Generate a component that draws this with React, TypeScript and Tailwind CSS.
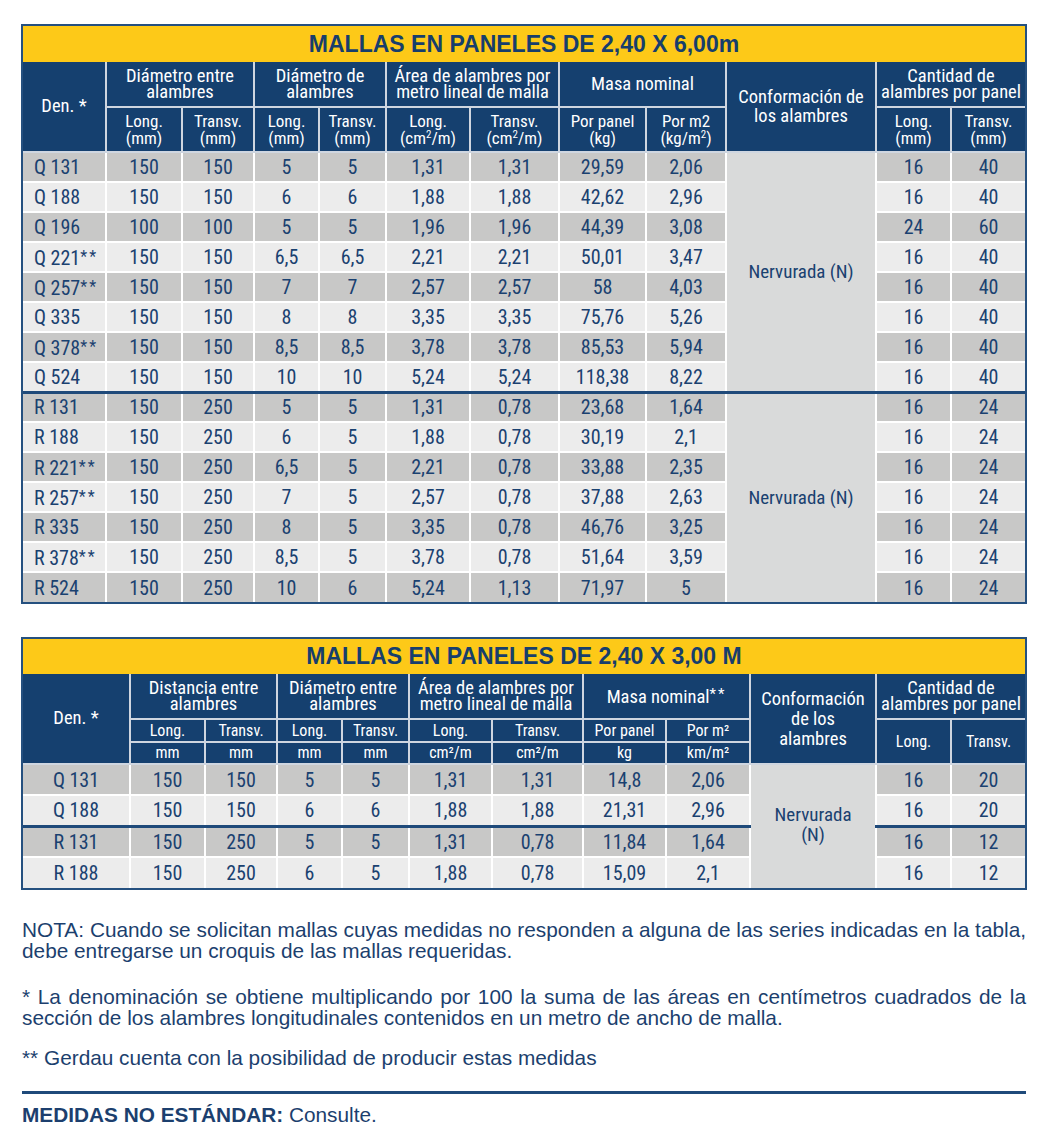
import React from "react";

type Row = string[];

const panel6: Row[] = [
  ["Q 131", "150", "150", "5", "5", "1,31", "1,31", "29,59", "2,06", "16", "40"],
  ["Q 188", "150", "150", "6", "6", "1,88", "1,88", "42,62", "2,96", "16", "40"],
  ["Q 196", "100", "100", "5", "5", "1,96", "1,96", "44,39", "3,08", "24", "60"],
  ["Q 221**", "150", "150", "6,5", "6,5", "2,21", "2,21", "50,01", "3,47", "16", "40"],
  ["Q 257**", "150", "150", "7", "7", "2,57", "2,57", "58", "4,03", "16", "40"],
  ["Q 335", "150", "150", "8", "8", "3,35", "3,35", "75,76", "5,26", "16", "40"],
  ["Q 378**", "150", "150", "8,5", "8,5", "3,78", "3,78", "85,53", "5,94", "16", "40"],
  ["Q 524", "150", "150", "10", "10", "5,24", "5,24", "118,38", "8,22", "16", "40"],
  ["R 131", "150", "250", "5", "5", "1,31", "0,78", "23,68", "1,64", "16", "24"],
  ["R 188", "150", "250", "6", "5", "1,88", "0,78", "30,19", "2,1", "16", "24"],
  ["R 221**", "150", "250", "6,5", "5", "2,21", "0,78", "33,88", "2,35", "16", "24"],
  ["R 257**", "150", "250", "7", "5", "2,57", "0,78", "37,88", "2,63", "16", "24"],
  ["R 335", "150", "250", "8", "5", "3,35", "0,78", "46,76", "3,25", "16", "24"],
  ["R 378**", "150", "250", "8,5", "5", "3,78", "0,78", "51,64", "3,59", "16", "24"],
  ["R 524", "150", "250", "10", "6", "5,24", "1,13", "71,97", "5", "16", "24"],
];

const panel3: Row[] = [
  ["Q 131", "150", "150", "5", "5", "1,31", "1,31", "14,8", "2,06", "16", "20"],
  ["Q 188", "150", "150", "6", "6", "1,88", "1,88", "21,31", "2,96", "16", "20"],
  ["R 131", "150", "250", "5", "5", "1,31", "0,78", "11,84", "1,64", "16", "12"],
  ["R 188", "150", "250", "6", "5", "1,88", "0,78", "15,09", "2,1", "16", "12"],
];

const widths6 = [83, 76, 72, 65, 67, 84, 89, 87, 80, 150, 75, 74];
const widths3 = [107, 75, 72, 65, 67, 83, 91, 83, 84, 126, 75, 74];

// "Q 221**" -> name + spaced stars
const Den = ({ v }: { v: string }) => {
  const name = v.replace(/\*+$/, "");
  const stars = v.slice(name.length);
  return (
    <>
      {name}
      {stars && <span className="text-[16px] tracking-[2px] align-[3px]">{stars}</span>}
    </>
  );
};

const th = "border-2 border-[#cfd6e0] text-white font-normal p-0 align-middle";
const td = "border-2 border-white p-0 text-center align-middle whitespace-nowrap";

export default function App() {
  return (
    <div className="w-[1048px] bg-white pt-[24px] pb-[20px] font-['Roboto_Condensed','Roboto',sans-serif] [font-stretch:condensed] text-[#1a4170]">
      {/* Mallas 2,40 x 6,00 */}
      <div className="mx-[21px] border-2 border-[#25507f]">
        <div className="h-[36px] bg-[#fdc918] flex items-center justify-center font-['Liberation_Sans',Arial,sans-serif] [font-stretch:normal] font-bold text-[23px] text-[#173e6c]">
          MALLAS EN PANELES DE 2,40 X 6,00m
        </div>
        <table className="w-full table-fixed border-collapse border-hidden">
          <colgroup>
            {widths6.map((w, i) => (
              <col key={i} style={{ width: w }} />
            ))}
          </colgroup>
          <thead className="bg-[#15406f]">
            <tr className="h-[45px] text-[18.5px] leading-[16.5px]">
              <th rowSpan={2} className={th}>Den. *</th>
              <th colSpan={2} className={th}>Diámetro entre<br />alambres</th>
              <th colSpan={2} className={th}>Diámetro de<br />alambres</th>
              <th colSpan={2} className={th}>Área de alambres por<br />metro lineal de malla</th>
              <th colSpan={2} className={th}>Masa nominal</th>
              <th rowSpan={2} className={`${th} leading-[19px]`}>Conformación de<br />los alambres</th>
              <th colSpan={2} className={th}>Cantidad de<br />alambres por panel</th>
            </tr>
            <tr className="h-[45px] text-[17px] leading-[17px]">
              <th className={th}>Long.<br />(mm)</th>
              <th className={th}>Transv.<br />(mm)</th>
              <th className={th}>Long.<br />(mm)</th>
              <th className={th}>Transv.<br />(mm)</th>
              <th className={th}>Long.<br />(cm<sup className="text-[11px]">2</sup>/m)</th>
              <th className={th}>Transv.<br />(cm<sup className="text-[11px]">2</sup>/m)</th>
              <th className={th}>Por panel<br />(kg)</th>
              <th className={th}>Por m2<br />(kg/m<sup className="text-[11px]">2</sup>)</th>
              <th className={th}>Long.<br />(mm)</th>
              <th className={th}>Transv.<br />(mm)</th>
            </tr>
          </thead>
          <tbody className="text-[20px] leading-[22px]">
            {panel6.map((r, i) => {
              const bg = i % 2 === 0 ? "bg-[#c8c8c7]" : "bg-[#ececec]";
              const sep = i === 8 ? " border-t-[3px] border-t-[#1f4a7a]" : "";
              return (
                <tr key={r[0]} className={`h-[30px] ${bg}`}>
                  <td className={`${td}${sep} text-left pl-[11px]`}><Den v={r[0]} /></td>
                  {r.slice(1, 9).map((v, j) => (
                    <td key={j} className={`${td}${sep}`}>{v}</td>
                  ))}
                  {(i === 0 || i === 8) && (
                    <td rowSpan={i === 0 ? 8 : 7} className={`${td}${sep} bg-[#d9dada] text-[19px]`}>
                      Nervurada (N)
                    </td>
                  )}
                  {r.slice(9).map((v, j) => (
                    <td key={j} className={`${td}${sep}`}>{v}</td>
                  ))}
                </tr>
              );
            })}
          </tbody>
        </table>
      </div>

      {/* Mallas 2,40 x 3,00 */}
      <div className="mx-[21px] mt-[33px] border-2 border-[#25507f]">
        <div className="h-[35px] bg-[#fdc918] flex items-center justify-center font-['Liberation_Sans',Arial,sans-serif] [font-stretch:normal] font-bold text-[23px] text-[#173e6c]">
          MALLAS EN PANELES DE 2,40 X 3,00 M
        </div>
        <table className="w-full table-fixed border-collapse border-hidden">
          <colgroup>
            {widths3.map((w, i) => (
              <col key={i} style={{ width: w }} />
            ))}
          </colgroup>
          <thead className="bg-[#15406f]">
            <tr className="h-[45px] text-[18.5px] leading-[16.5px]">
              <th rowSpan={3} className={th}>Den. *</th>
              <th colSpan={2} className={th}>Distancia entre<br />alambres</th>
              <th colSpan={2} className={th}>Diámetro entre<br />alambres</th>
              <th colSpan={2} className={th}>Área de alambres por<br />metro lineal de malla</th>
              <th colSpan={2} className={th}>
                Masa nominal<span className="text-[15px] tracking-[2px] align-[4px]">**</span>
              </th>
              <th rowSpan={3} className={`${th} leading-[20px]`}>Conformación<br />de los<br />alambres</th>
              <th colSpan={2} className={th}>Cantidad de<br />alambres por panel</th>
            </tr>
            <tr className="h-[23px] text-[16px] leading-[18px]">
              <th className={th}>Long.</th>
              <th className={th}>Transv.</th>
              <th className={th}>Long.</th>
              <th className={th}>Transv.</th>
              <th className={th}>Long.</th>
              <th className={th}>Transv.</th>
              <th className={th}>Por panel</th>
              <th className={th}>Por m²</th>
              <th rowSpan={2} className={th}>Long.</th>
              <th rowSpan={2} className={th}>Transv.</th>
            </tr>
            <tr className="h-[22px] text-[16px] leading-[18px]">
              <th className={th}>mm</th>
              <th className={th}>mm</th>
              <th className={th}>mm</th>
              <th className={th}>mm</th>
              <th className={th}>cm²/m</th>
              <th className={th}>cm²/m</th>
              <th className={th}>kg</th>
              <th className={th}>km/m²</th>
            </tr>
          </thead>
          <tbody className="text-[20px] leading-[22px]">
            {panel3.map((r, i) => {
              const bg = i % 2 === 0 ? "bg-[#c8c8c7]" : "bg-[#ececec]";
              const sep = i === 2 ? " border-t-[3px] border-t-[#1f4a7a]" : "";
              return (
                <tr key={r[0]} className={`h-[31px] ${bg}`}>
                  <td className={`${td}${sep}`}>{r[0]}</td>
                  {r.slice(1, 9).map((v, j) => (
                    <td key={j} className={`${td}${sep}`}>{v}</td>
                  ))}
                  {i === 0 && (
                    <td rowSpan={4} className={`${td} bg-[#d9dada] text-[19px] leading-[20px] pb-[4px]`}>
                      Nervurada<br />(N)
                    </td>
                  )}
                  {r.slice(9).map((v, j) => (
                    <td key={j} className={`${td}${sep}`}>{v}</td>
                  ))}
                </tr>
              );
            })}
          </tbody>
        </table>
      </div>

      {/* Notas */}
      <div className="mx-[22px] mt-[29px] font-['Liberation_Sans',Arial,sans-serif] [font-stretch:normal] text-[20.8px] leading-[21px] text-[#1c3f6e] text-justify">
        <p>
          NOTA: Cuando se solicitan mallas cuyas medidas no responden a alguna de las series indicadas en la tabla,
          debe entregarse un croquis de las mallas requeridas.
        </p>
        <p className="mt-[25px]">
          * La denominación se obtiene multiplicando por 100 la suma de las áreas en centímetros cuadrados de la
          sección de los alambres longitudinales contenidos en un metro de ancho de malla.
        </p>
        <p className="mt-[19px]">** Gerdau cuenta con la posibilidad de producir estas medidas</p>
        <div className="mt-[23px] h-[3px] bg-[#1f4a7a]" />
        <p className="mt-[10px]">
          <span className="font-bold">MEDIDAS NO ESTÁNDAR:</span> Consulte.
        </p>
      </div>
    </div>
  );
}
